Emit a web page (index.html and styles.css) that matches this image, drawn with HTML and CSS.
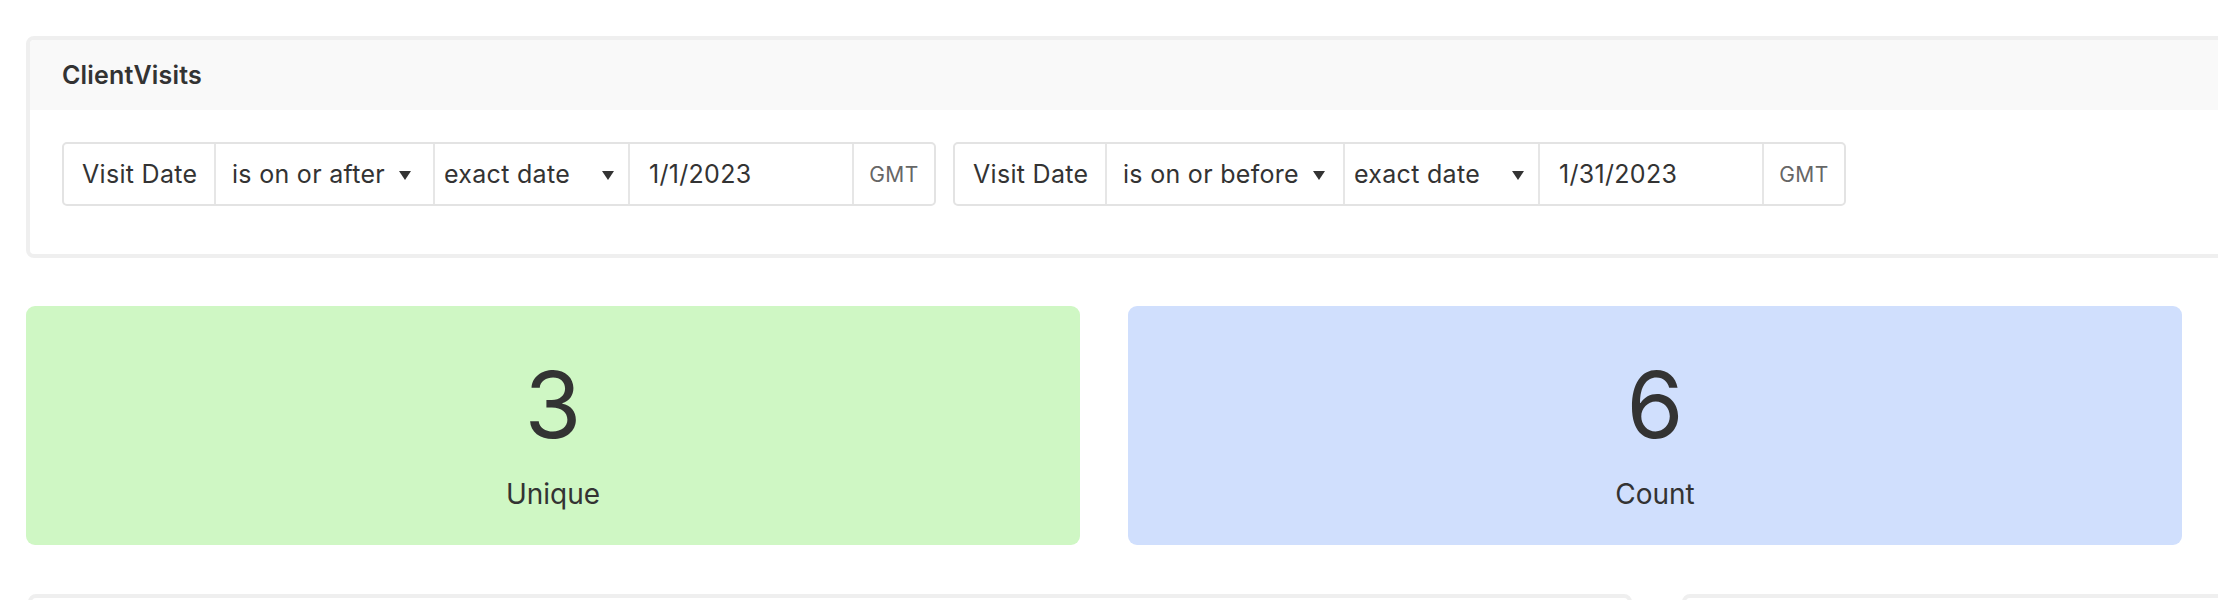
FILE: index.html
```html
<!DOCTYPE html>
<html>
<head>
<meta charset="utf-8">
<link rel="stylesheet" href="styles.css">
</head>
<body>
<div class="page">
  <section class="panel">
    <header class="panel-head">ClientVisits</header>
    <div class="panel-body">
      <div class="filter">
        <div class="seg seg-label">Visit Date</div>
        <div class="seg seg-op seg-op-after">is on or after <span class="caret"></span></div>
        <div class="seg seg-mode">exact date <span class="caret"></span></div>
        <div class="seg seg-date">1/1/2023</div>
        <div class="seg seg-tz">GMT</div>
      </div>
      <div class="filter">
        <div class="seg seg-label">Visit Date</div>
        <div class="seg seg-op seg-op-before">is on or before <span class="caret"></span></div>
        <div class="seg seg-mode">exact date <span class="caret"></span></div>
        <div class="seg seg-date">1/31/2023</div>
        <div class="seg seg-tz">GMT</div>
      </div>
    </div>
  </section>

  <div class="stats">
    <div class="stat stat-green">
      <div class="stat-value">3</div>
      <div class="stat-label">Unique</div>
    </div>
    <div class="stat stat-blue">
      <div class="stat-value">6</div>
      <div class="stat-label">Count</div>
    </div>
  </div>

  <div class="lower">
    <div class="lower-panel lower-left"></div>
    <div class="lower-panel lower-right"></div>
  </div>
</div>
</body>
</html>
```

FILE: styles.css
```css
html, body {
  margin: 0;
  padding: 0;
  background: #ffffff;
  overflow: hidden;
}
body {
  font-family: Inter, "Liberation Sans", sans-serif;
  color: #333333;
}
.page {
  padding: 36px 0 0 26px;
  width: 2400px;
}
.panel {
  width: 2300px;
  border: 4px solid #efefef;
  border-radius: 8px;
  background: #ffffff;
}
.panel-head {
  height: 70px;
  background: #f9f9f9;
  display: flex;
  align-items: center;
  padding-left: 32px;
  font-size: 25px;
  font-weight: 600;
  letter-spacing: 0.2px;
  color: #333333;
  border-radius: 4px 4px 0 0;
}
.panel-body {
  display: flex;
  gap: 17px;
  padding: 32px 32px 48px 32px;
}
.filter {
  display: flex;
  flex-shrink: 0;
  height: 64px;
  box-sizing: border-box;
  border: 2px solid #e3e3e3;
  border-radius: 5px;
  font-size: 25px;
  letter-spacing: 0.3px;
  color: #333333;
}
.seg {
  display: flex;
  align-items: center;
  box-sizing: border-box;
  border-left: 2px solid #e6e6e6;
  white-space: nowrap;
}
.seg:first-child {
  border-left: none;
}
.seg-label {
  width: 150px;
  padding-left: 18px;
}
.seg-op {
  padding-left: 16px;
  gap: 14px;
}
.seg-op-after {
  width: 219px;
}
.seg-op-before {
  width: 238px;
}
.seg-mode {
  width: 195px;
  padding: 0 14px 0 9px;
  justify-content: space-between;
}
.seg-date {
  width: 224px;
  padding-left: 19px;
}
.seg-tz {
  width: 82px;
  justify-content: center;
  font-size: 21px;
  letter-spacing: 0.4px;
  color: #666666;
}
.caret {
  display: inline-block;
  width: 0;
  height: 0;
  border-left: 6px solid transparent;
  border-right: 6px solid transparent;
  border-top: 9px solid #333333;
  margin-top: 2px;
}
.stats {
  display: flex;
  gap: 48px;
  margin-top: 48px;
}
.stat {
  flex-shrink: 0;
  width: 1054px;
  height: 239px;
  border-radius: 9px;
  display: flex;
  flex-direction: column;
  align-items: center;
  color: #333333;
}
.stat-green {
  background: #cff7c4;
}
.stat-blue {
  background: #d0dffd;
}
.stat-value {
  margin-top: 49px;
  font-size: 92px;
  line-height: 100px;
  font-weight: 400;
}
.stat-label {
  margin-top: 22px;
  font-size: 28px;
  line-height: 34px;
}
.lower {
  display: flex;
  gap: 50px;
  margin-top: 49px;
  padding-left: 2px;
}
.lower-panel {
  flex-shrink: 0;
  height: 200px;
  border: 4px solid #efefef;
  border-radius: 8px;
  box-sizing: border-box;
}
.lower-left {
  width: 1604px;
}
.lower-right {
  width: 800px;
}
```
